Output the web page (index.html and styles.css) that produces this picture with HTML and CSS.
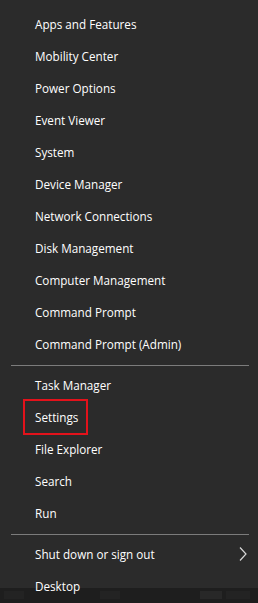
FILE: index.html
```html
<!DOCTYPE html>
<html>
<head>
<meta charset="utf-8">
<link rel="stylesheet" href="styles.css">
</head>
<body>
<div class="menu">
  <ul class="group">
    <li class="item">Apps and Features</li>
    <li class="item">Mobility Center</li>
    <li class="item">Power Options</li>
    <li class="item">Event Viewer</li>
    <li class="item">System</li>
    <li class="item">Device Manager</li>
    <li class="item">Network Connections</li>
    <li class="item">Disk Management</li>
    <li class="item">Computer Management</li>
    <li class="item">Command Prompt</li>
    <li class="item">Command Prompt (Admin)</li>
  </ul>
  <div class="sep"></div>
  <ul class="group">
    <li class="item">Task Manager</li>
    <li class="item"><span class="highlight">Settings</span></li>
    <li class="item">File Explorer</li>
    <li class="item">Search</li>
    <li class="item">Run</li>
  </ul>
  <div class="sep"></div>
  <ul class="group">
    <li class="item has-sub">Shut down or sign out
      <svg class="chev" width="8" height="16" viewBox="0 0 8 16"><path d="M1 1.5 L7 8 L1 14.5" fill="none" stroke="#d8d8d8" stroke-width="1.2"/></svg>
    </li>
    <li class="item">Desktop</li>
  </ul>
</div>
<div class="taskbar">
  <span class="tb tb1"></span>
  <span class="tb tb2"></span>
  <span class="tb tb3"></span>
  <span class="tb tb4"></span>
</div>
</body>
</html>
```
FILE: styles.css
```css
html, body {
  margin: 0;
  padding: 0;
  height: 603px;
  overflow: hidden;
  background: #2b2b2b;
}
body {
  position: relative;
  font-family: "Open Sans", "Noto Sans", sans-serif;
  font-size: 11.7px;
  color: #ffffff;
}
.menu {
  padding-top: 8px;
  position: relative;
  z-index: 1;
}
.group {
  list-style: none;
  margin: 0;
  padding: 0;
}
.item {
  height: 32px;
  display: flex;
  align-items: center;
  padding-left: 35px;
  padding-right: 10px;
  box-sizing: border-box;
  position: relative;
}
.has-sub {
  justify-content: space-between;
}
.chev {
  display: block;
  margin-right: 1px;
}
.highlight {
  position: relative;
}
.highlight::before {
  content: "";
  position: absolute;
  left: -12px;
  right: -10px;
  top: -10px;
  bottom: -10px;
  border: 2.5px solid #e3121b;
}
.sep {
  height: 1px;
  background: #7c7c7c;
  margin: 5px 9px 3px 11px;
}
.taskbar {
  position: absolute;
  left: 0;
  right: 0;
  bottom: 0;
  height: 15px;
  background: #1e1e1e;
  z-index: 0;
}
.tb {
  position: absolute;
  top: 3px;
  height: 8px;
  background: #232323;
}
.tb1 { left: 4px; width: 20px; }
.tb2 { left: 100px; width: 20px; }
.tb3 { left: 200px; width: 22px; background: #282828; }
.tb4 { left: 226px; width: 24px; }
```
